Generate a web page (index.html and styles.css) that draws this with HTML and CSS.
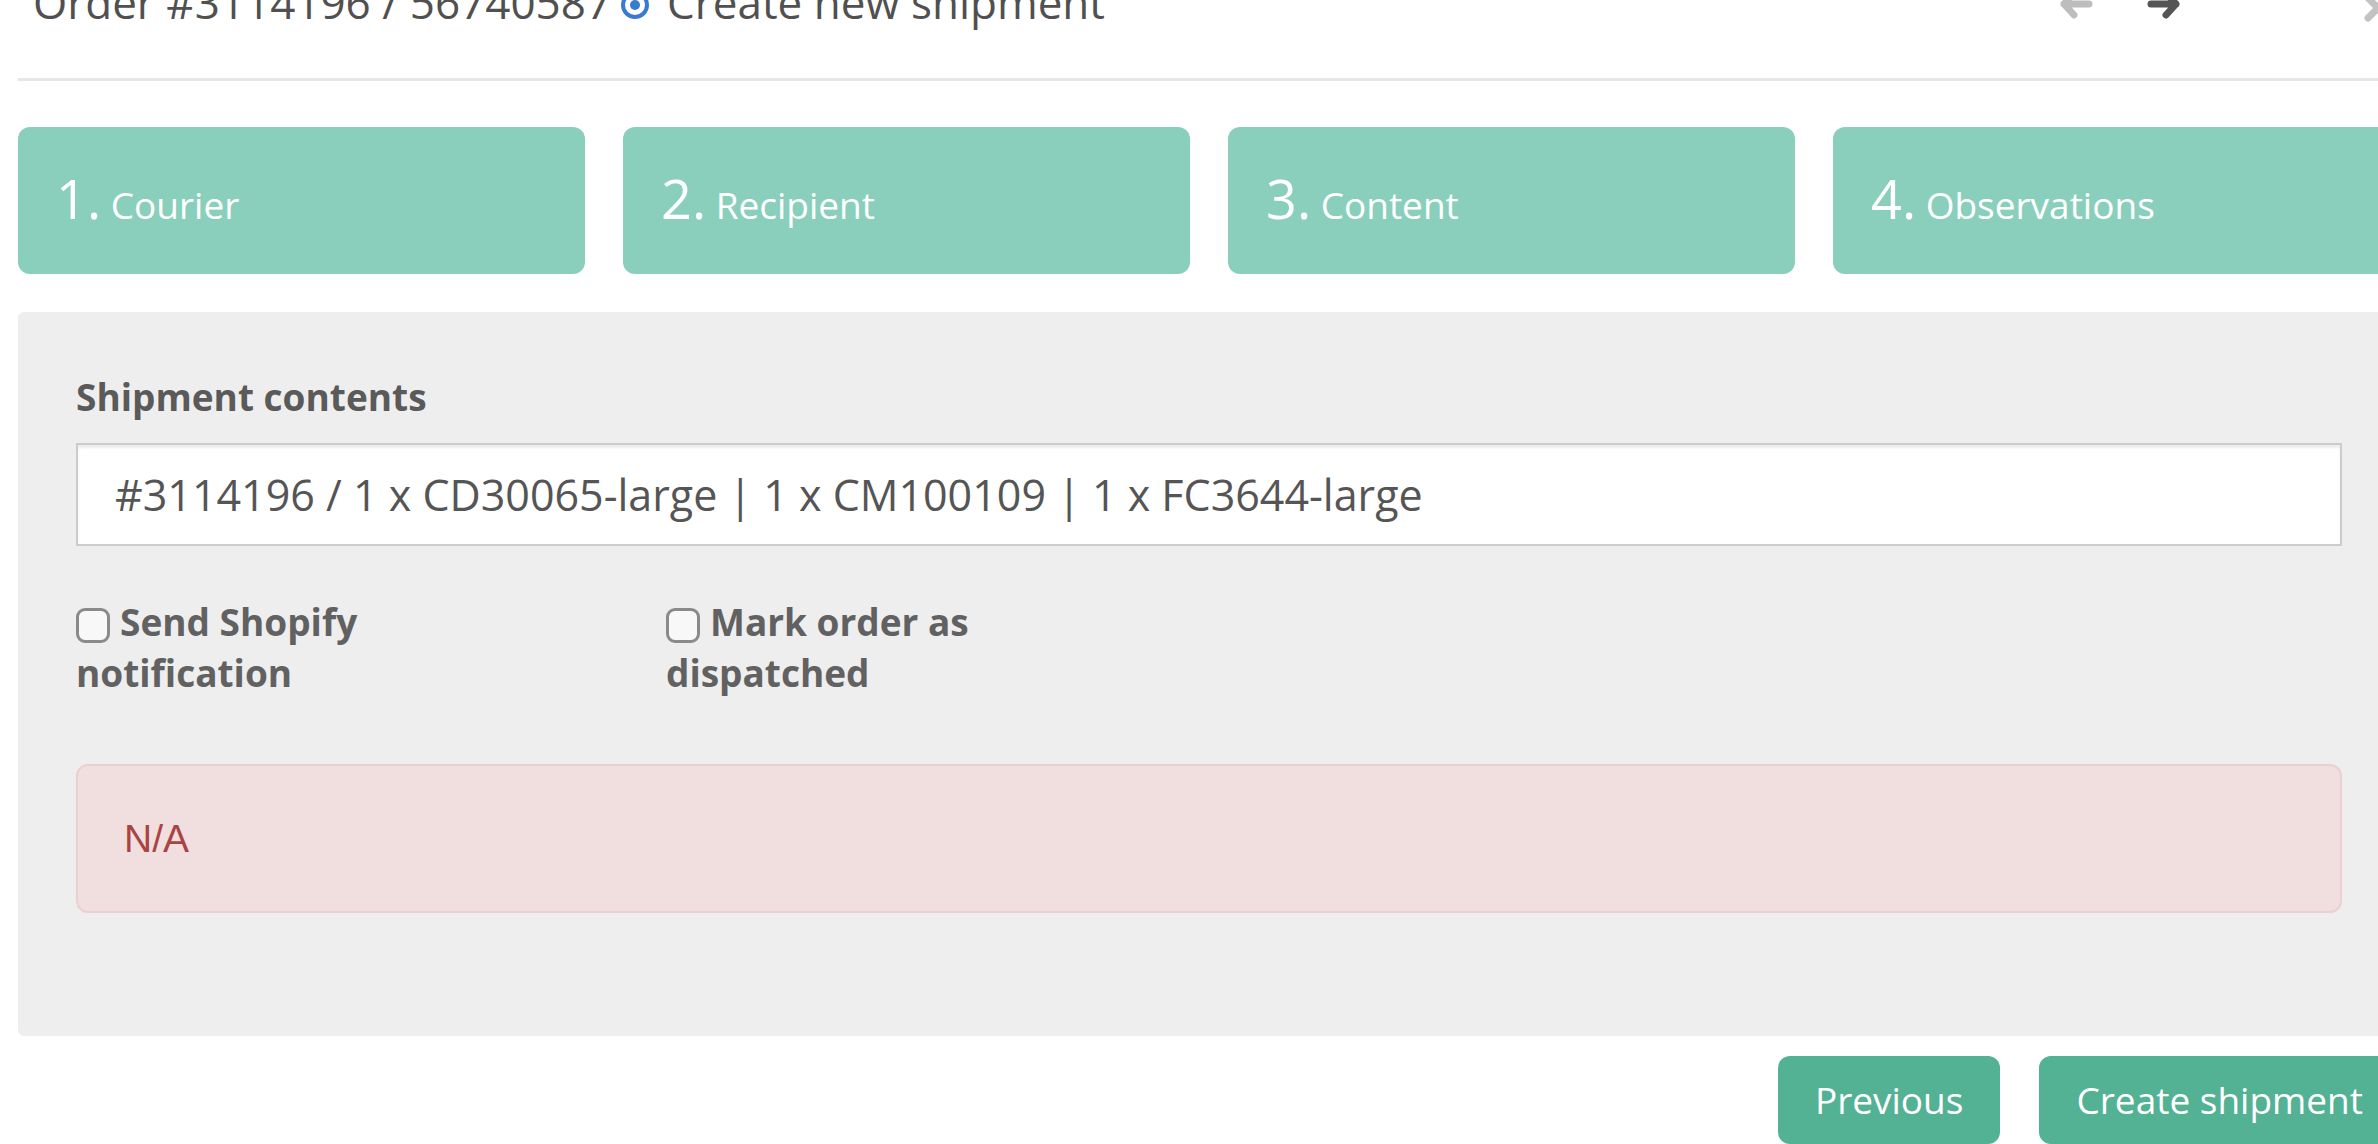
FILE: index.html
```html
<!DOCTYPE html>
<html>
<head>
<meta charset="utf-8">
<title>Create new shipment</title>
<link rel="stylesheet" href="styles.css">
</head>
<body>
<div class="modal">
  <div class="modal-header">
    <h4 class="title">
      <span>Order #3114196 / 56740587</span>
      <svg class="dot-icon" width="30" height="30" viewBox="0 0 30 30"><circle cx="15" cy="15" r="12" fill="none" stroke="#3a7bd0" stroke-width="4"/><circle cx="15" cy="15" r="5" fill="#3a7bd0"/></svg>
      <span>Create new shipment</span>
    </h4>
    <div class="nav">
      <svg class="arrow" width="36" height="32" viewBox="0 0 36 32"><path d="M31 16H6M16 5L6 16L16 27" fill="none" stroke="#bdbdbd" stroke-width="7" stroke-linecap="round" stroke-linejoin="round"/></svg>
      <svg class="arrow" width="36" height="32" viewBox="0 0 36 32"><path d="M5 16H30M20 5L30 16L20 27" fill="none" stroke="#555" stroke-width="7" stroke-linecap="round" stroke-linejoin="round"/></svg>
    </div>
    <svg class="close" width="32" height="32" viewBox="0 0 32 32"><path d="M6 6L26 26M26 6L6 26" fill="none" stroke="#c2c2c2" stroke-width="7" stroke-linecap="round"/></svg>
  </div>

  <div class="steps">
    <div class="step"><div class="step-text"><span class="num">1.</span><span class="lbl"> Courier</span></div></div>
    <div class="step"><div class="step-text"><span class="num">2.</span><span class="lbl"> Recipient</span></div></div>
    <div class="step"><div class="step-text"><span class="num">3.</span><span class="lbl"> Content</span></div></div>
    <div class="step"><div class="step-text"><span class="num">4.</span><span class="lbl"> Observations</span></div></div>
  </div>

  <div class="panel">
    <label class="field-label">Shipment contents</label>
    <div class="input">#3114196 / 1 x CD30065-large | 1 x CM100109 | 1 x FC3644-large</div>
    <div class="checks">
      <div class="check"><label><span class="cb"></span>Send Shopify notification</label></div>
      <div class="check"><label><span class="cb"></span>Mark order as dispatched</label></div>
    </div>
    <div class="alert">N/A</div>
  </div>

  <div class="footer">
    <button class="btn">Previous</button>
    <button class="btn">Create shipment</button>
  </div>
</div>
</body>
</html>
```

FILE: styles.css
```css
html, body {
  margin: 0;
  padding: 0;
  overflow: hidden;
  background: #ffffff;
}

body {
  font-family: "Open Sans", "Liberation Sans", sans-serif;
  color: #555555;
}

.modal {
  width: 2382px;
  margin-left: 18px;
}

.modal-header {
  display: flex;
  align-items: flex-start;
  height: 78px;
  border-bottom: 3px solid #e7e7e7;
  padding-left: 15px;
  padding-right: 6px;
}

.title {
  display: flex;
  align-items: center;
  margin: -28px 0 0 0;
  font-size: 44px;
  line-height: 60px;
  font-weight: 400;
  color: #505050;
  white-space: nowrap;
}

.dot-icon {
  margin-left: 9px;
  margin-right: 17px;
  margin-top: 6px;
}

.nav {
  display: flex;
  gap: 52px;
  margin-left: auto;
  margin-top: -12px;
  margin-right: 180px;
}

.arrow {
  display: block;
}

.close {
  display: block;
  margin-top: -8px;
}

.steps {
  display: grid;
  grid-template-columns: repeat(4, 567px);
  column-gap: 38px;
  margin-top: 46px;
}

.step {
  height: 147px;
  box-sizing: border-box;
  background: #89cfbc;
  border-radius: 12px;
  padding-left: 38px;
  display: flex;
  align-items: center;
  color: #ffffff;
}

.step-text {
  font-size: 54px;
  line-height: 74px;
  white-space: nowrap;
  margin-top: 2px;
}

.step .lbl {
  font-size: 37px;
}

.panel {
  margin-top: 38px;
  height: 724px;
  box-sizing: border-box;
  background: #eeeeee;
  border-radius: 6px;
  padding: 59px 58px 0 58px;
}

.field-label {
  display: block;
  font-size: 37px;
  font-weight: 700;
  line-height: 52px;
  color: #5a5a5a;
  margin-bottom: 20px;
}

.input {
  height: 103px;
  box-sizing: border-box;
  background: #ffffff;
  border: 2px solid #cccccc;
  box-shadow: inset 0 3px 3px rgba(0, 0, 0, 0.075);
  padding: 0 37px;
  display: flex;
  align-items: center;
  font-size: 43px;
  color: #555555;
  white-space: nowrap;
}

.checks {
  display: grid;
  grid-template-columns: 590px 590px;
  margin-top: 50px;
}

.check label {
  display: block;
  max-width: 360px;
  font-size: 37px;
  font-weight: 700;
  line-height: 51px;
  color: #616161;
}

.cb {
  display: inline-block;
  box-sizing: content-box;
  width: 28px;
  height: 29px;
  border: 3px solid #8a8a8a;
  border-radius: 9px;
  background: #f8f8f8;
  vertical-align: -7px;
  margin-right: 10px;
}

.alert {
  margin-top: 66px;
  height: 149px;
  box-sizing: border-box;
  background: #f0dfde;
  border: 2px solid #ebcfd2;
  border-radius: 12px;
  padding: 0 46px;
  display: flex;
  align-items: center;
  font-family: "Liberation Sans", Arial, sans-serif;
  font-size: 39px;
  color: #a94442;
}

.footer {
  display: flex;
  justify-content: flex-end;
  gap: 39px;
  margin-top: 20px;
}

.btn {
  height: 88px;
  padding: 0 37px;
  border: none;
  border-radius: 12px;
  background: #53b194;
  color: #ffffff;
  font-family: "Open Sans", "Liberation Sans", sans-serif;
  font-size: 37px;
  line-height: 88px;
}
```
